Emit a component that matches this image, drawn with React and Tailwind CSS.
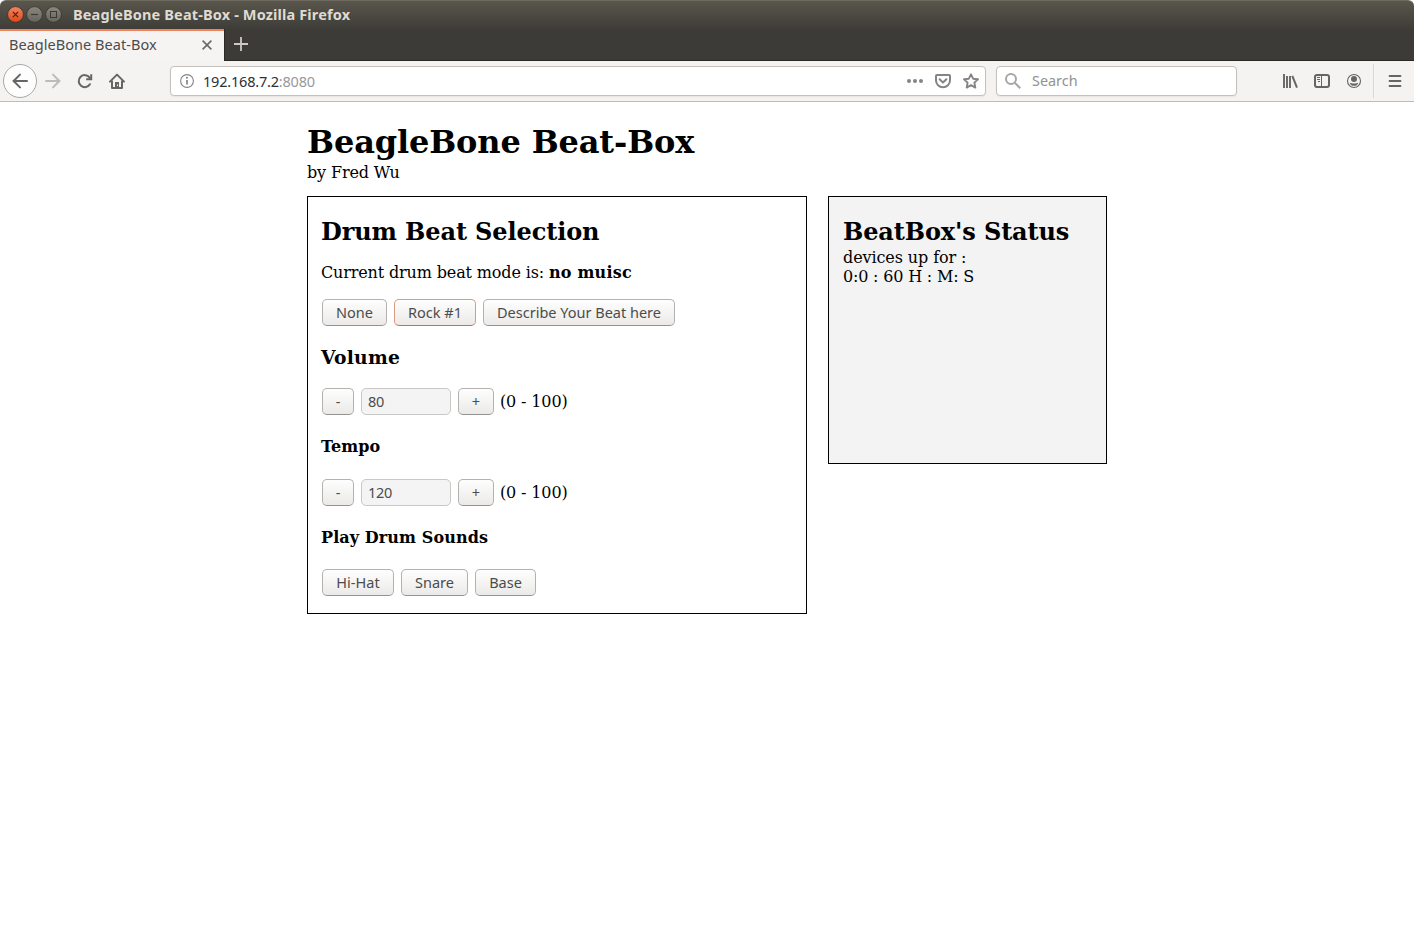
import React from "react";

function WindowButton({ kind }) {
  const close = kind === "close";
  return (
    <svg width="17" height="17" viewBox="0 0 17 17" className="block">
      <defs>
        <linearGradient id={"wb-" + kind} x1="0" y1="0" x2="0" y2="1">
          <stop offset="0" stopColor={close ? "#f58462" : "#8b887f"} />
          <stop offset="1" stopColor={close ? "#dd4814" : "#66635b"} />
        </linearGradient>
      </defs>
      <circle cx="8.5" cy="8.5" r="7.9" fill={"url(#wb-" + kind + ")"} stroke="#33322d" strokeWidth="0.8" />
      {kind === "close" && <path d="M5.9 5.9l5.2 5.2M11.1 5.9l-5.2 5.2" stroke="#4a2217" strokeWidth="1.2" />}
      {kind === "min" && <path d="M5 8.5h7" stroke="#3a3934" strokeWidth="1.1" />}
      {kind === "max" && <rect x="5.5" y="5.5" width="6" height="6" fill="none" stroke="#3a3934" strokeWidth="1" />}
    </svg>
  );
}

function TitleBar() {
  return (
    <div className="bg-white">
      <div className="flex h-[29px] items-center rounded-t-[6px] border-t border-[#6d6a60] bg-linear-to-b from-[#5a564c] to-[#3e3d38] pb-px pl-[7px]">
        <div className="flex gap-[2px]">
          <WindowButton kind="close" />
          <WindowButton kind="min" />
          <WindowButton kind="max" />
        </div>
        <div className="ml-[11px] whitespace-nowrap pb-px font-['Noto_Sans',sans-serif] text-[14.5px] font-bold leading-[20px] tracking-[0.15px] text-[#dfdbd2]">
          BeagleBone Beat-Box - Mozilla Firefox
        </div>
      </div>
    </div>
  );
}

function TabStrip() {
  return (
    <div className="flex h-8 bg-[#3c3b37]">
      <div className="flex w-[224px] items-center border-t-2 border-[#f0835c] bg-[#f5f4f2] pb-[2px] pl-[9px]">
        <span className="w-[148px] whitespace-nowrap pb-[2px] font-['Noto_Sans',sans-serif] text-[14.5px] leading-[20px] tracking-[0.04px] text-[#4c4c4c]">
          BeagleBone Beat-Box
        </span>
        <svg width="10" height="10" viewBox="0 0 10 10" className="ml-[45px]">
          <path d="M0.6 0.6l8.8 8.8M9.4 0.6L0.6 9.4" stroke="#6a6968" strokeWidth="1.6" />
        </svg>
      </div>
      <div className="flex flex-1 items-center border-b border-l border-[#2a2926] pb-px pl-[9px]">
        <svg width="14" height="14" viewBox="0 0 14 14">
          <path d="M7 0v14M0 7h14" stroke="#cfc9c2" strokeWidth="1.8" />
        </svg>
      </div>
    </div>
  );
}

function ToolIcon({ children, color = "#666564", className = "" }) {
  return (
    <svg width="16" height="16" viewBox="0 0 16 16" fill="none" stroke={color} strokeWidth="2" className={"block shrink-0 " + className}>
      {children}
    </svg>
  );
}

function Toolbar() {
  return (
    <div className="flex h-[41px] items-center border-b border-[#bfbdba] bg-[#f4f3f1] pl-[3px]">
      <div className="flex h-[34px] w-[34px] items-center justify-center rounded-full border border-[#a9a8a5] bg-[#fdfdfd]">
        <ToolIcon>
          <path d="M1.4 8H15M8 1.6L1.6 8L8 14.4" strokeLinecap="round" strokeLinejoin="round" />
        </ToolIcon>
      </div>
      <ToolIcon color="#bcbbb9" className="ml-2">
        <path d="M14.6 8H1M8 1.6L14.4 8L8 14.4" strokeLinecap="round" strokeLinejoin="round" />
      </ToolIcon>
      <ToolIcon className="ml-4">
        <path d="M12.9 11.2A6 6 0 1 1 12.6 4.6" strokeLinecap="round" />
        <path d="M14.2 1.2V6.2H9.2" />
      </ToolIcon>
      <ToolIcon className="ml-4">
        <path d="M1 8.6L8 1.6L15 8.6" strokeLinecap="round" strokeLinejoin="round" />
        <path d="M3 7.5V15h10V7.5" strokeLinejoin="round" />
        <path d="M6 15V9h4v6z" fill="#666564" stroke="none" />
        <rect x="8" y="11.5" width="1" height="1.5" fill="#f4f3f1" stroke="none" />
      </ToolIcon>

      <div className="ml-[45px] flex h-[30px] w-[816px] items-center rounded-[4px] border border-[#c4c1bc] bg-white pl-[9px] pr-[6px] shadow-[0_1px_2px_rgba(0,0,0,0.06)]">
        <svg width="14" height="14" viewBox="0 0 14 14" fill="none" className="block">
          <circle cx="7" cy="7" r="6.4" stroke="#858483" strokeWidth="1.1" />
          <path d="M7 6v4.6" stroke="#858483" strokeWidth="1.7" />
          <circle cx="7" cy="3.8" r="1.05" fill="#858483" />
        </svg>
        <div className="ml-[9px] whitespace-nowrap font-['Noto_Sans',sans-serif] text-[14.5px] leading-[20px] tracking-[-0.2px] text-[#2f2f2f]">
          192.168.7.2<span className="text-[#999]">:8080</span>
        </div>
        <div className="flex-1" />
        <div className="flex items-center gap-3">
          <ToolIcon color="#858483">
            <g fill="#858483" stroke="none">
              <circle cx="2" cy="8" r="2" />
              <circle cx="8" cy="8" r="2" />
              <circle cx="14" cy="8" r="2" />
            </g>
          </ToolIcon>
          <ToolIcon color="#858483">
            <path d="M2 2h12a1 1 0 0 1 1 1v4.6a7 6.6 0 0 1-14 0V3a1 1 0 0 1 1-1z" />
            <path d="M4.6 6.2L8 9.5l3.4-3.3" strokeLinecap="round" strokeLinejoin="round" />
          </ToolIcon>
          <ToolIcon color="#858483">
            <path d="M8 1.3l2.1 4.4 4.9.6-3.6 3.3.9 5L8 12.2l-4.3 2.4.9-5L1 6.3l4.9-.6z" strokeWidth="1.9" strokeLinejoin="round" />
          </ToolIcon>
        </div>
      </div>

      <div className="ml-[10px] flex h-[30px] w-[241px] items-center rounded-[4px] border border-[#c4c1bc] bg-white pl-2 shadow-[0_1px_2px_rgba(0,0,0,0.06)]">
        <ToolIcon color="#a7a6a5">
          <circle cx="6" cy="6" r="5" />
          <path d="M9.6 9.6l5.6 5.6" />
        </ToolIcon>
        <span className="ml-[11px] font-['Noto_Sans',sans-serif] text-[14.4px] leading-[20px] text-[#929292]">Search</span>
      </div>

      <ToolIcon className="ml-[45px]">
        <path d="M2 1v14M5 3v12M8 3v12" strokeWidth="1.9" />
        <path d="M10.3 2.8L15 14.7" />
      </ToolIcon>
      <ToolIcon className="ml-4">
        <rect x="1" y="2" width="14" height="12" rx="2" />
        <path d="M7.5 2v12" strokeWidth="1" />
        <path d="M3 4.5h3M3 6.5h3M4 8.5h2" strokeWidth="1" />
      </ToolIcon>
      <ToolIcon className="ml-4">
        <circle cx="8" cy="8" r="6.5" strokeWidth="1.1" />
        <circle cx="8" cy="5.9" r="3" fill="#666564" stroke="none" />
        <path d="M3.8 9.4C5.4 10.7 10.6 10.7 12.2 9.4C12.2 11.4 10.4 12.8 8 12.8S3.8 11.4 3.8 9.4z" fill="#666564" stroke="none" />
      </ToolIcon>
      <div className="ml-[11px] h-[34px] w-px bg-[#d9d8d6]" />
      <ToolIcon className="ml-[13px]">
        <path d="M2.6 3h10.8M2.6 8h10.8M2.6 13h10.8" strokeLinecap="round" />
      </ToolIcon>
    </div>
  );
}

function Button({ children, className = "", active = false }) {
  return (
    <button
      className={
        "flex h-[27px] items-center justify-center whitespace-nowrap rounded-[5px] border bg-linear-to-b from-[#fefefe] to-[#ebeae8] pb-[2px] font-['Noto_Sans',sans-serif] text-[14.5px] leading-[20px] tracking-normal text-[#4c4c4c] " +
        (active ? "border-[#dc9a82] border-b-[#cf6c48] " : "border-[#b3b2b0] border-b-[#949391] ") +
        className
      }
    >
      {children}
    </button>
  );
}

function Stepper({ value }) {
  return (
    <div className="ml-px flex h-[27px] items-center">
      <Button className="w-8">-</Button>
      <input
        readOnly
        value={value}
        className="ml-[7px] h-[27px] w-[90px] rounded-[5px] border border-[#c9c8c7] bg-[#f4f4f4] px-[6px] pb-[2px] font-['Noto_Sans',sans-serif] text-[14.5px] tracking-[-0.3px] text-[#4c4c4c] outline-none"
      />
      <Button className="ml-[7px] w-9">+</Button>
      <span className="ml-[6px] whitespace-nowrap leading-[19px]">(0 - 100)</span>
    </div>
  );
}

function Page() {
  return (
    <main className="mx-auto w-[800px] pt-[21px] font-['DejaVu_Serif',serif] text-[16px] leading-[19px] tracking-[-0.14px] text-black">
      <h1 className="h-10 text-[32px] font-bold leading-[38px]">BeagleBone Beat-Box</h1>
      <p>by Fred Wu</p>
      <div className="mt-[14px] flex items-start justify-between">
        <section className="h-[418px] w-[500px] border border-black px-[13px] pt-[21px]">
          <h2 className="text-[24px] font-bold leading-[28px] tracking-[-0.11px]">Drum Beat Selection</h2>
          <p className="mt-[17px]">
            Current drum beat mode is: <b className="tracking-[0.2px]">no muisc</b>
          </p>
          <div className="ml-px mt-[17px] flex gap-[7px]">
            <Button className="w-[65px]">None</Button>
            <Button className="w-[82px]" active>Rock #1</Button>
            <Button className="w-[192px]">Describe Your Beat here</Button>
          </div>
          <h3 className="mb-5 mt-5 text-[18.72px] font-bold leading-[22px] tracking-[0.25px]">Volume</h3>
          <Stepper value="80" />
          <h4 className="mb-[23px] mt-[22px] font-bold tracking-[0.02px]">Tempo</h4>
          <Stepper value="120" />
          <h4 className="mb-[22px] mt-[22px] font-bold tracking-[0.1px]">Play Drum Sounds</h4>
          <div className="ml-px flex gap-[7px]">
            <Button className="w-[72px]">Hi-Hat</Button>
            <Button className="w-[67px]">Snare</Button>
            <Button className="w-[61px]">Base</Button>
          </div>
        </section>
        <aside className="h-[268px] w-[279px] border border-black bg-[#f3f3f3] px-[14px] pt-[21px]">
          <h2 className="text-[24px] font-bold leading-[28px] tracking-[-0.11px]">BeatBox's Status</h2>
          <p className="mt-[2px] tracking-[-0.1px]">devices up for :</p>
          <p className="tracking-[-0.18px]">0:0 : 60 H : M: S</p>
        </aside>
      </div>
    </main>
  );
}

export default function App() {
  return (
    <div className="h-[929px] w-[1414px] overflow-hidden bg-white">
      <TitleBar />
      <TabStrip />
      <Toolbar />
      <Page />
    </div>
  );
}
